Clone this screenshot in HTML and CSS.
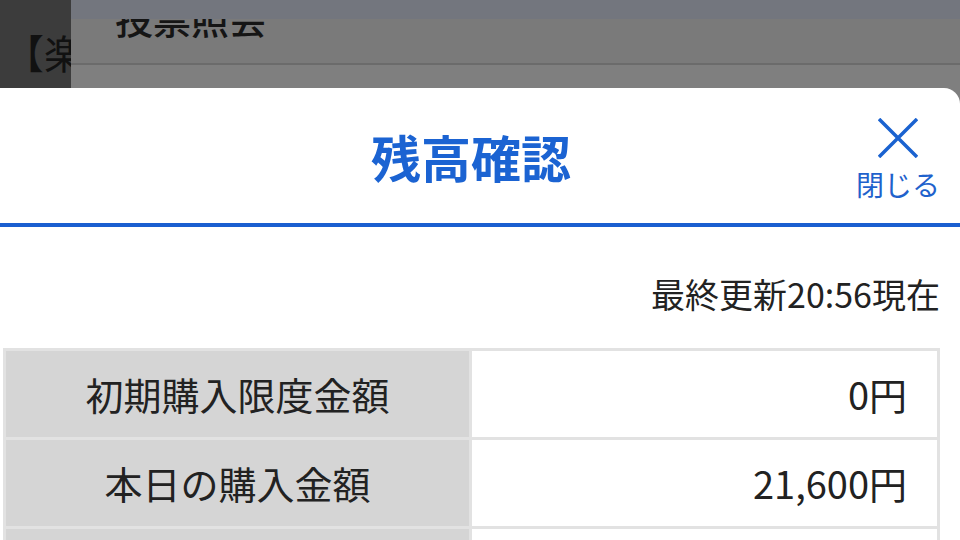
FILE: index.html
```html
<!DOCTYPE html>
<html lang="ja">
<head>
  <meta charset="UTF-8" />
  <title>残高確認</title>
  <link rel="stylesheet" href="styles.css">
</head>
<body>

  <div class="behind">
    <div class="side">【楽天</div>
    <div class="behind-main">
      <div class="strip"></div>
      <div class="bar">
        <h2>投票照会</h2>
      </div>
      <div class="bar-line"></div>
      <div class="bar-low"></div>
    </div>
  </div>

  <div class="modal">
    <div class="modal-head">
      <h1>残高確認</h1>
      <button class="close">
        <svg width="40" height="40" viewBox="0 0 40 40">
          <path d="M1 1 L39 39 M39 1 L1 39" stroke="#1a62d0" stroke-width="3.5" fill="none" />
        </svg>
        <span>閉じる</span>
      </button>
    </div>

    <p class="updated">最終更新20:56現在</p>

    <table class="balance">
      <tr>
        <td class="label">初期購入限度金額</td>
        <td class="value">0円</td>
      </tr>
      <tr>
        <td class="label">本日の購入金額</td>
        <td class="value">21,600円</td>
      </tr>
      <tr>
        <td class="label"></td>
        <td class="value"></td>
      </tr>
    </table>
  </div>

</body>
</html>
```

FILE: styles.css
```css
body {
  margin: 0;
  background-color: #7f7f7f;
  font-family: "Noto Sans CJK JP", "Noto Sans", sans-serif;
  color: #222;
  overflow: hidden;
}

/* dimmed page behind the modal */
.behind {
  display: flex;
  height: 88px;
}

.side {
  width: 71px;
  background: #3c3c3c;
  color: #111;
  font-size: 40px;
  line-height: 40px;
  padding: 32px 0 0 4px;
  box-sizing: border-box;
  white-space: nowrap;
  overflow: hidden;
}

.behind-main {
  flex: 1;
}

.strip {
  height: 19px;
  background: #73767e;
}

.bar {
  height: 44px;
  background: #7a7a7a;
  overflow: hidden;
  padding-left: 44px;
}

.bar h2 {
  margin: -20px 0 0;
  font-size: 38px;
  line-height: 38px;
  font-weight: 500;
  color: #151515;
}

.bar-line {
  height: 2px;
  background: #6b6b6b;
}

.bar-low {
  height: 23px;
  background: #7f7f7f;
}

/* modal */
.modal {
  background: white;
  border-top-right-radius: 16px;
  min-height: 600px;
}

.modal-head {
  display: grid;
  grid-template-columns: 1fr auto;
  align-items: center;
  height: 135px;
  border-bottom: 4px solid #1a5fd0;
}

.modal-head h1 {
  margin: 0;
  padding-left: 86px;
  text-align: center;
  font-size: 50px;
  font-weight: bold;
  color: #1b63d2;
}

.close {
  align-self: start;
  display: flex;
  flex-direction: column;
  align-items: center;
  background: none;
  border: none;
  padding: 30px 20px 0 0;
  margin: 0;
  font-family: inherit;
  cursor: pointer;
}

.close span {
  margin-top: 10px;
  font-size: 28px;
  line-height: 32px;
  color: #1f62cc;
}

.updated {
  margin: 47px 20px 34px 0;
  text-align: right;
  font-size: 34px;
  line-height: 40px;
}

.balance {
  margin-left: 3px;
  width: 937px;
  border-collapse: collapse;
}

.balance td {
  border: 3px solid #e2e2e2;
  height: 86px;
  padding: 0;
  font-size: 38px;
  line-height: 44px;
}

.balance .label {
  width: 463px;
  background: #d5d5d5;
  text-align: center;
}

.balance .value {
  text-align: right;
  padding-right: 30px;
}
```
